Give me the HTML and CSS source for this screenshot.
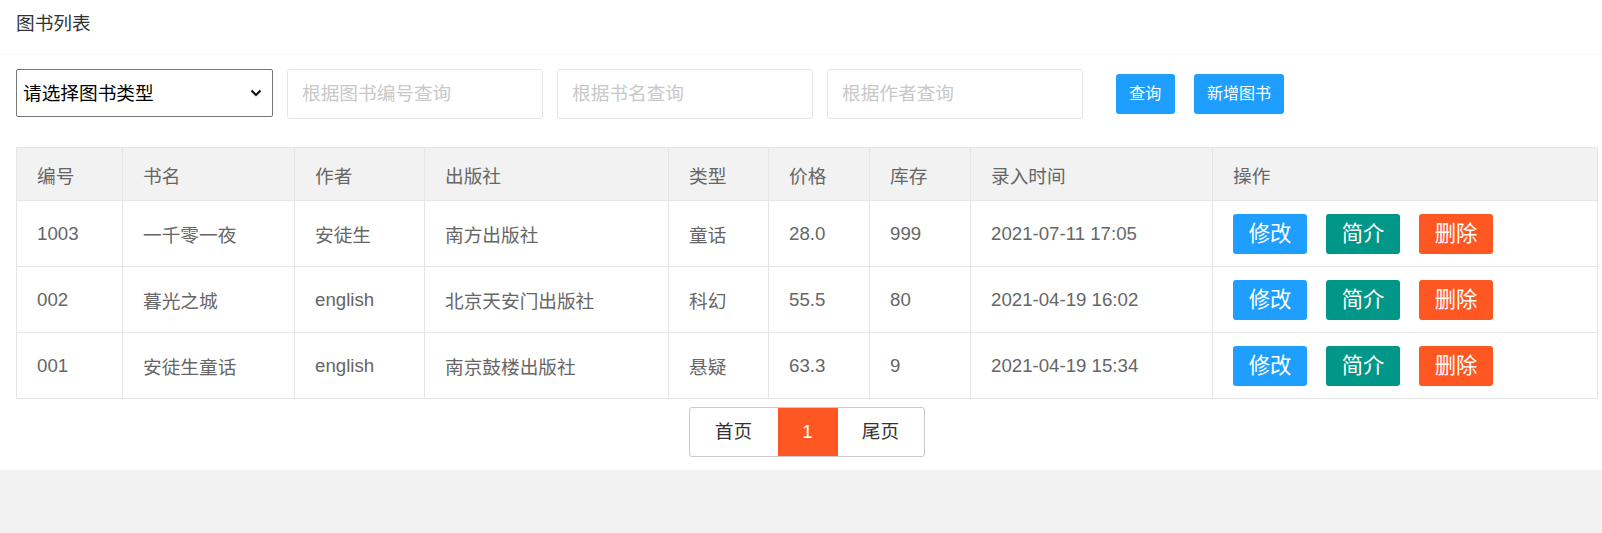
FILE: index.html
```html
<!DOCTYPE html>
<html lang="zh-CN">
<head>
<meta charset="utf-8">
<title>图书列表</title>
<link rel="stylesheet" href="styles.css">
</head>
<body>
<div class="card">
  <div class="card-header">图书列表</div>
  <div class="card-body">
    <div class="toolbar">
      <select class="type-select">
        <option>请选择图书类型</option>
        <option>童话</option>
        <option>科幻</option>
        <option>悬疑</option>
      </select>
      <input class="search" type="text" placeholder="根据图书编号查询">
      <input class="search" type="text" placeholder="根据书名查询">
      <input class="search" type="text" placeholder="根据作者查询">
      <button class="btn btn-sm btn-query">查询</button>
      <button class="btn btn-sm">新增图书</button>
    </div>
    <table class="book-table">
      <colgroup>
        <col class="c-id"><col class="c-name"><col class="c-author"><col class="c-pub"><col class="c-type"><col class="c-price"><col class="c-stock"><col class="c-time"><col class="c-op">
      </colgroup>
      <thead>
        <tr><th>编号</th><th>书名</th><th>作者</th><th>出版社</th><th>类型</th><th>价格</th><th>库存</th><th>录入时间</th><th>操作</th></tr>
      </thead>
      <tbody>
        <tr><td>1003</td><td>一千零一夜</td><td>安徒生</td><td>南方出版社</td><td>童话</td><td>28.0</td><td>999</td><td>2021-07-11 17:05</td>
          <td><span class="op op-edit">修改</span><span class="op op-info">简介</span><span class="op op-del">删除</span></td></tr>
        <tr><td>002</td><td>暮光之城</td><td>english</td><td>北京天安门出版社</td><td>科幻</td><td>55.5</td><td>80</td><td>2021-04-19 16:02</td>
          <td><span class="op op-edit">修改</span><span class="op op-info">简介</span><span class="op op-del">删除</span></td></tr>
        <tr><td>001</td><td>安徒生童话</td><td>english</td><td>南京鼓楼出版社</td><td>悬疑</td><td>63.3</td><td>9</td><td>2021-04-19 15:34</td>
          <td><span class="op op-edit">修改</span><span class="op op-info">简介</span><span class="op op-del">删除</span></td></tr>
      </tbody>
    </table>
    <div class="pager-wrap">
      <div class="pager">
        <a class="page page-first">首页</a><span class="page page-cur">1</span><a class="page page-last">尾页</a>
      </div>
    </div>
  </div>
</div>
</body>
</html>
```
FILE: styles.css
```css
html, body {
  margin: 0;
  padding: 0;
}
body {
  background: #f2f2f2;
  font-family: "Liberation Sans", Arial, "Noto Sans CJK SC", sans-serif;
  color: #333;
}
.card {
  background: #fff;
}
.card-header {
  height: 54px;
  line-height: 48px;
  padding: 0 16px;
  font-size: 18.67px;
  color: #333;
  border-bottom: 1px solid #f6f6f6;
}
.card-body {
  padding: 14px 5px 13px 16px;
}
.toolbar {
  display: flex;
  align-items: flex-start;
  gap: 14px;
}
.type-select {
  -webkit-appearance: none;
  appearance: none;
  width: 257px;
  height: 48px;
  margin: 0;
  padding: 0 30px 0 6px;
  font-family: "Liberation Sans", Arial, "Noto Sans CJK SC", sans-serif;
  font-size: 18.67px;
  color: #000;
  background-color: #fff;
  background-image: url("data:image/svg+xml,%3Csvg xmlns='http://www.w3.org/2000/svg' width='12' height='8' viewBox='0 0 12 8'%3E%3Cpath d='M1.5 1.5 L6 6 L10.5 1.5' fill='none' stroke='%23111' stroke-width='2.2'/%3E%3C/svg%3E");
  background-repeat: no-repeat;
  background-position: right 10px center;
  background-size: 12px 8px;
  border: 1px solid #767676;
  border-radius: 2px;
}
.search {
  box-sizing: border-box;
  width: 256px;
  height: 50px;
  margin: 0;
  padding: 0 14px;
  font-family: "Liberation Sans", Arial, "Noto Sans CJK SC", sans-serif;
  font-size: 18.67px;
  color: #333;
  border: 1px solid #e6e6e6;
  border-radius: 3px;
  outline: none;
}
.search::placeholder {
  color: #c8c8c8;
}
.btn {
  box-sizing: border-box;
  height: 40px;
  padding: 0 13.3px;
  margin: 0;
  border: none;
  border-radius: 3px;
  background: #1e9fff;
  color: #fff;
  font-family: "Liberation Sans", Arial, "Noto Sans CJK SC", sans-serif;
  font-size: 16px;
  line-height: 40px;
  align-self: center;
  white-space: nowrap;
}
.btn-query {
  margin-left: 19px;
  margin-right: 5px;
}
.book-table {
  width: 1581px;
  margin-top: 28px;
  border-collapse: collapse;
  table-layout: fixed;
  font-size: 18.67px;
  color: #666;
}
.c-id { width: 106px; }
.c-name { width: 172px; }
.c-author { width: 130px; }
.c-pub { width: 244px; }
.c-type { width: 100px; }
.c-price { width: 101px; }
.c-stock { width: 101px; }
.c-time { width: 242px; }
.c-op { width: 385px; }
.book-table th,
.book-table td {
  border: 1px solid #e6e6e6;
  padding: 0 20px;
  text-align: left;
  vertical-align: middle;
  font-weight: normal;
  white-space: nowrap;
  overflow: hidden;
}
.book-table th {
  height: 52px;
  background: #f2f2f2;
}
.book-table td {
  height: 65px;
}
.op {
  display: inline-block;
  vertical-align: middle;
  width: 74px;
  height: 40px;
  line-height: 40px;
  text-align: center;
  color: #fff;
  font-size: 21.33px;
  border-radius: 3px;
  margin-right: 19px;
}
.op-edit { background: #1e9fff; }
.op-info { background: #009688; }
.op-del { background: #ff5722; margin-right: 0; }
.pager-wrap {
  width: 1581px;
  margin-top: 8px;
  display: flex;
  justify-content: center;
}
.pager {
  display: flex;
  height: 48px;
  border: 1px solid #c9c9c9;
  border-radius: 3px;
  overflow: hidden;
}
.page {
  display: block;
  height: 48px;
  line-height: 48px;
  font-size: 18.67px;
  color: #333;
  text-align: center;
}
.page-first { width: 88px; }
.page-cur {
  width: 60px;
  background: #ff5722;
  color: #fff;
}
.page-last { width: 86px; }
```
